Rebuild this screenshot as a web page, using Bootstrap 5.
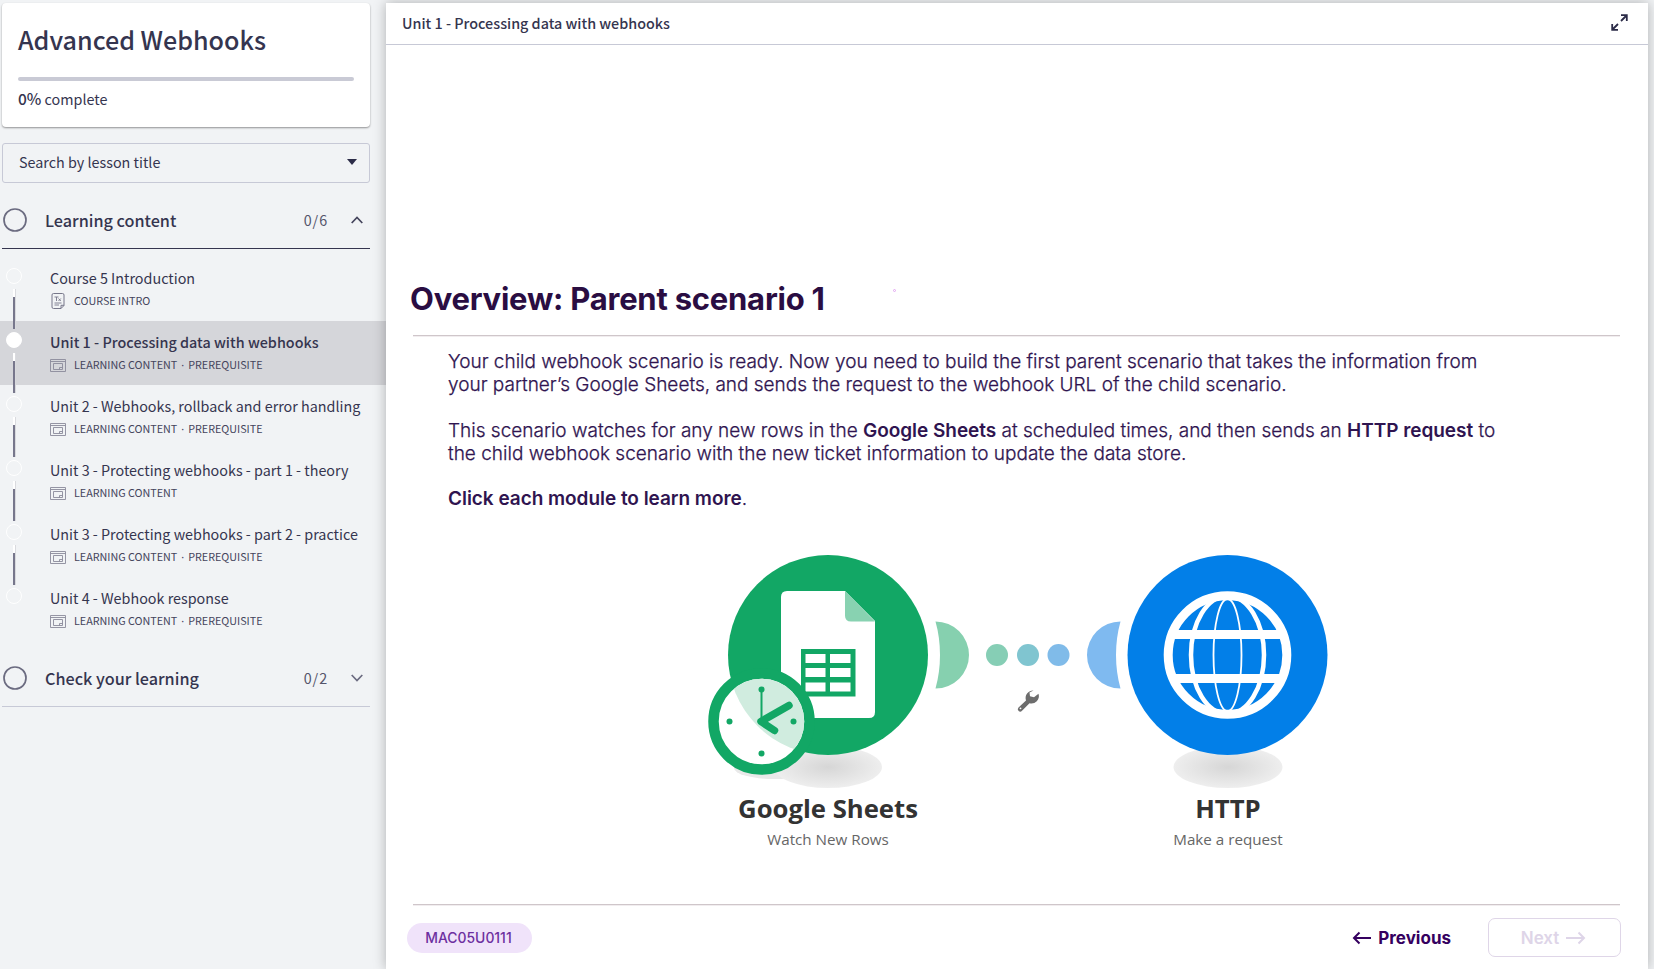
<!DOCTYPE html>
<html lang="en">
<head>
<meta charset="utf-8">
<title>Advanced Webhooks</title>
<link href="https://cdn.jsdelivr.net/npm/bootstrap@5.3.0/dist/css/bootstrap.min.css" rel="stylesheet">
<style>
body{height:969px;overflow:hidden;background:#f1f3f5;color:#35354f;font-family:"Noto Sans CJK SC","Noto Sans",sans-serif;font-size:14.35px;line-height:20px}
.sidebar{width:386px;flex:none;padding-top:3px}
.course-card{margin:0 16px 0 2px;height:124px;padding:19px 16px 0;border-radius:4px;background:#fff;box-shadow:0 1px 2px rgba(0,0,0,.4)}
.course-title{font-size:25.1px;line-height:34px;font-weight:500;margin:0 0 21px}
.course-bar{height:4px;border-radius:2px;background:#c9cad5}
.course-done{margin-top:7px}
.course-done b{font-weight:500;font-size:15.5px}
.lesson-search{margin:16px 16px 0 2px;height:40px;border:1px solid #c7c9d6;border-radius:3px;padding:0 12px 2px 16px}
.section-head{margin:0 16px 0 2px;height:66px;border-bottom:1px solid #35354f;padding:8px 7px 0 1px}
.section-head.closed{border-color:#c7c9d6}
.section-name{font-size:16.2px;font-weight:500;margin-left:18px}
.section-count{margin-right:23px;letter-spacing:.9px;color:#55556b}
.lesson-list{padding-top:8px}
.lesson{height:64px;padding:11px 0 0 50px;position:relative}
.lesson.current{background:#d5d6da}
.lesson.current .lesson-name{font-weight:500;letter-spacing:.02px}
.lesson-meta{font-size:10.75px;line-height:14px;gap:8px;height:16px;margin-top:5px;color:#44445c}
.lesson-meta i{font-family:"Noto Sans",sans-serif;font-style:normal;margin:0 4px}
.lesson-dot{position:absolute;left:6px;top:11px;width:16px;height:16px;border:1px solid #fff;border-radius:50%}
.current .lesson-dot{background:#fff}
.lesson-link{position:absolute;z-index:1;left:13px;top:32px;width:3px;height:40px;background:linear-gradient(#fff 8px,#77778c 8px);border-right:1px solid #d9dade}
.player{flex:none;width:1262px;margin-top:3px;background:#fff;box-shadow:0 0 12px rgba(0,0,0,.28);position:relative;z-index:2}
.player-head{height:42px;border-bottom:1px solid #c7c9d6;padding:0 20px 2px 16px;font-weight:500}
.slide{font-family:Inter,sans-serif;color:#2f1450;padding:234px 28px 0 27px;position:relative}
.slide-title{font-size:31px;line-height:40px;font-weight:700;letter-spacing:-.23px;margin:0 0 16px -3px;color:#2a0d42}
.slide-rule{height:1px;background:#cfc6ca;box-shadow:0 1px #f1edef}
.slide-speck{position:absolute;left:507px;top:244px;width:3px;height:3px;border:1px solid #e3a5f3;border-radius:50%}
.slide-copy{font-size:19px;line-height:22.9px;font-weight:300;margin:15px 0 0 35px;-webkit-text-stroke:.25px #2f1450}
.slide-copy p{margin:0 0 22.9px}
.slide-copy b{font-weight:600;-webkit-text-stroke:0;letter-spacing:-.04px}
.module-title{font:700 25.7px "Open Sans",sans-serif;fill:#333}
.module-sub{font:400 15.2px "Open Sans",sans-serif;fill:#666}
.slide-diagram{margin:34px 0 39px 287px}
.slide-foot{padding-top:13px;margin-right:-1px}
.unit-code{width:125px;height:30px;border-radius:15px;background:#f0e3fa;color:#6d2fa0;font-size:13.9px;font-weight:500;margin-left:-6px;padding-right:2px}
.nav-prev{font-size:17px;font-weight:700;color:#35005f;gap:6px;margin-right:37px}
.nav-next{width:133px;height:39px;border:1.5px solid #dfd6e8;border-radius:7px;font-size:17px;font-weight:600;color:#ded5e8;gap:7px;padding-right:2px}
</style>
</head>
<body>
<svg class="d-none">
<symbol id="lesson-icon" viewBox="0 0 16 13"><path d="M.5 .5h15v12H.5zM.5 2.500h15M3.500 4.500h9v6h-9zM9.500 10.500v-2h3" fill="none" stroke="#8a8a9b" stroke-width=".9"/></symbol>
<symbol id="intro-icon" viewBox="0 0 13 16"><path d="M9.500 15.500H2Q.5 15.500 .5 14V2Q.5 .5 2 .5h9q1.500 0 1.500 1.500v10.500zM9.500 15.500v-3.200h3" fill="none" stroke="#77778a"/><path d="M3 4h4M5 4v4M7 5.500l2.300 2.500M9.300 5.500L7 8M3 10h7M3 12h4.500" fill="none" stroke="#77778a" stroke-width=".9"/></symbol>
</svg>
<div class="d-flex align-items-stretch h-100">
<aside class="sidebar">
 <div class="course-card"><h1 class="course-title">Advanced Webhooks</h1><div class="course-bar"></div><div class="course-done"><b>0%</b> complete</div></div>
 <div class="lesson-search d-flex align-items-center justify-content-between"><span>Search by lesson title</span><svg width="10" height="6"><path d="M0 0h10L5 6z" fill="#2c2c48"/></svg></div>
 <div class="section-head d-flex align-items-center"><svg width="24" height="24"><circle cx="12" cy="12" r="11" fill="none" stroke="#6b6b80" stroke-width="1.700"/></svg><span class="section-name me-auto">Learning content</span><span class="section-count">0/6</span><svg width="12" height="8"><path d="M.7 7L6 1.500 11.300 7" fill="none" stroke="#44445c" stroke-width="1.700"/></svg></div>
 <div class="lesson-list">
 <div class="lesson"><i class="lesson-dot"></i><i class="lesson-link"></i><div class="lesson-name">Course 5 Introduction</div><div class="lesson-meta d-flex align-items-center"><svg width="16" height="16"><use href="#intro-icon"/></svg><span>COURSE INTRO</span></div></div>
 <div class="lesson current"><i class="lesson-dot"></i><i class="lesson-link"></i><div class="lesson-name">Unit 1 - Processing data with webhooks</div><div class="lesson-meta d-flex align-items-center"><svg width="16" height="13"><use href="#lesson-icon"/></svg><span>LEARNING CONTENT<i>·</i>PREREQUISITE</span></div></div>
 <div class="lesson"><i class="lesson-dot"></i><i class="lesson-link"></i><div class="lesson-name">Unit 2 - Webhooks, rollback and error handling</div><div class="lesson-meta d-flex align-items-center"><svg width="16" height="13"><use href="#lesson-icon"/></svg><span>LEARNING CONTENT<i>·</i>PREREQUISITE</span></div></div>
 <div class="lesson"><i class="lesson-dot"></i><i class="lesson-link"></i><div class="lesson-name">Unit 3 - Protecting webhooks - part 1 - theory</div><div class="lesson-meta d-flex align-items-center"><svg width="16" height="13"><use href="#lesson-icon"/></svg><span>LEARNING CONTENT</span></div></div>
 <div class="lesson"><i class="lesson-dot"></i><i class="lesson-link"></i><div class="lesson-name">Unit 3 - Protecting webhooks - part 2 - practice</div><div class="lesson-meta d-flex align-items-center"><svg width="16" height="13"><use href="#lesson-icon"/></svg><span>LEARNING CONTENT<i>·</i>PREREQUISITE</span></div></div>
 <div class="lesson"><i class="lesson-dot"></i><div class="lesson-name">Unit 4 - Webhook response</div><div class="lesson-meta d-flex align-items-center"><svg width="16" height="13"><use href="#lesson-icon"/></svg><span>LEARNING CONTENT<i>·</i>PREREQUISITE</span></div></div>
 </div>
 <div class="section-head closed d-flex align-items-center"><svg width="24" height="24"><circle cx="12" cy="12" r="11" fill="none" stroke="#6b6b80" stroke-width="1.700"/></svg><span class="section-name me-auto">Check your learning</span><span class="section-count">0/2</span><svg width="12" height="8"><path d="M.7 1L6 6.500 11.300 1" fill="none" stroke="#6b6b80" stroke-width="1.700"/></svg></div>
</aside>
<main class="player">
 <div class="player-head d-flex align-items-center justify-content-between"><span>Unit 1 - Processing data with webhooks</span><svg width="17" height="17" viewBox="0 0 17 17"><path d="M10 7L15 2M7 10L2 15M10 1.200h5.800V7M1.200 10v5.800H7" fill="none" stroke="#2c2c48" stroke-width="1.800"/></svg></div>
 <div class="slide">
  <i class="slide-speck"></i>
  <h2 class="slide-title">Overview: Parent scenario 1</h2>
  <div class="slide-rule"></div>
  <div class="slide-copy">
   <p>Your child webhook scenario is ready. Now you need to build the first parent scenario that takes the information from<br>your partner’s Google Sheets, and sends the request to the webhook URL of the child scenario.</p>
   <p>This scenario watches for any new rows in the <b>Google Sheets</b> at scheduled times, and then sends an <b>HTTP request</b> to<br>the child webhook scenario with the new ticket information to update the data store.</p>
   <p class="mb-0"><b>Click each module to learn more</b>.</p>
  </div>
  <svg class="slide-diagram d-block" width="660" height="320" viewBox="700 545 660 320">
   <defs>
    <radialGradient id="shade"><stop offset="0" stop-color="#d6d6d6"/><stop offset="1" stop-color="#eee"/></radialGradient>
    <clipPath id="big"><circle cx="828" cy="655" r="100"/></clipPath>
    <clipPath id="ring"><circle cx="1227.500" cy="655" r="63"/></clipPath>
   </defs>
   <ellipse cx="774" cy="768" rx="40" ry="11" fill="#e9e9e9"/>
   <ellipse cx="828" cy="767" rx="54" ry="21" fill="url(#shade)"/>
   <circle cx="828" cy="655" r="100" fill="#12a765"/>
   <path d="M787 591h58l30 30v91q0 6-6 6h-82q-6 0-6-6V597q0-6 6-6z" fill="#fff"/>
   <path d="M845 591l30 30.500h-24q-6 0-6-6z" fill="#88d2b1"/>
   <path d="M801 649h54.500v47.500H801z" fill="#12a765"/>
   <path d="M805.500 654h20v9h-20zM830 654h20.500v9H830zM805.500 668h20v9h-20zM830 668h20.500v9H830zM805.500 682.500h20v9h-20zM830 682.500h20.500v9H830z" fill="#fff"/>
   <circle cx="761.500" cy="721.500" r="48" fill="#fff" stroke="#12a765" stroke-width="10.500"/>
   <g clip-path="url(#big)"><circle cx="761.500" cy="721.500" r="42.700" fill="#d0ecdf"/></g>
   <path d="M761.500 721.500v-32" stroke="#12a765" stroke-width="2"/>
   <g fill="#12a765"><circle cx="761.500" cy="689.500" r="3"/><circle cx="729.500" cy="721.500" r="3"/><circle cx="793.500" cy="721.500" r="3"/><circle cx="761.500" cy="753.500" r="3"/></g>
   <path d="M789 705.500L761 721.500L774.500 730.500" fill="none" stroke="#12a765" stroke-width="7.500" stroke-linecap="round" stroke-linejoin="round"/>
   <path d="M935.500 621.500a33.500 33.500 0 0 1 0 67q4.500-16 4.500-33.500t-4.500-33.500z" fill="#86d0af"/>
   <circle cx="997" cy="655" r="11" fill="#86ceb5"/><circle cx="1028" cy="655" r="11" fill="#80c5d0"/><circle cx="1058.500" cy="655" r="11" fill="#80bbe9"/>
   <path d="M1120.500 621.500a33.500 33.500 0 1 0 0 67q-4.500-16-4.500-33.500t4.500-33.500z" fill="#7fbaf0"/>
   <path d="M1033.500 690.500a7.500 7.500 0 0 0-7.500 10l-7.500 7a2.300 2.300 0 0 0 3.500 3.300l7.500-7.500a7.500 7.500 0 0 0 9-9.500l-4.500 3.500-4-1-.5-3.800z" fill="#6d6d6d"/>
   <circle cx="1020.500" cy="708.300" r=".9" fill="#fff"/>
   <ellipse cx="1228" cy="767" rx="54.500" ry="21" fill="url(#shade)"/>
   <circle cx="1227.500" cy="655" r="100" fill="#027fe8"/>
   <g fill="none" stroke="#fff">
    <circle cx="1227.500" cy="655" r="59.300" stroke-width="9"/>
    <g clip-path="url(#ring)"><path d="M1168 634.500h119M1168 678.500h119" stroke-width="9"/></g>
    <ellipse cx="1227.500" cy="655" rx="36.500" ry="59" stroke-width="4.500"/>
    <ellipse cx="1227.500" cy="655" rx="14" ry="56" stroke-width="1.800"/>
   </g>
   <text class="module-title" x="828" y="818" text-anchor="middle">Google Sheets</text>
   <text class="module-sub" x="828" y="845" text-anchor="middle">Watch New Rows</text>
   <text class="module-title" x="1228" y="818" text-anchor="middle">HTTP</text>
   <text class="module-sub" x="1228" y="845" text-anchor="middle">Make a request</text>
  </svg>
  <div class="slide-rule"></div>
  <div class="slide-foot d-flex align-items-center">
   <div class="unit-code d-flex align-items-center justify-content-center me-auto">MAC05U0111</div>
   <div class="nav-prev d-flex align-items-center"><svg width="20" height="14"><path d="M19 7H2M7.500 1.500L2 7l5.500 5.500" fill="none" stroke="currentColor" stroke-width="2"/></svg><span>Previous</span></div>
   <div class="nav-next d-flex align-items-center justify-content-center"><span>Next</span><svg width="20" height="14"><path d="M0 7h18M12.500 1.500L18 7l-5.500 5.500" fill="none" stroke="currentColor" stroke-width="2"/></svg></div>
  </div>
 </div>
</main>
</div>
<script src="https://cdn.jsdelivr.net/npm/bootstrap@5.3.0/dist/js/bootstrap.bundle.min.js"></script>
</body>
</html>
